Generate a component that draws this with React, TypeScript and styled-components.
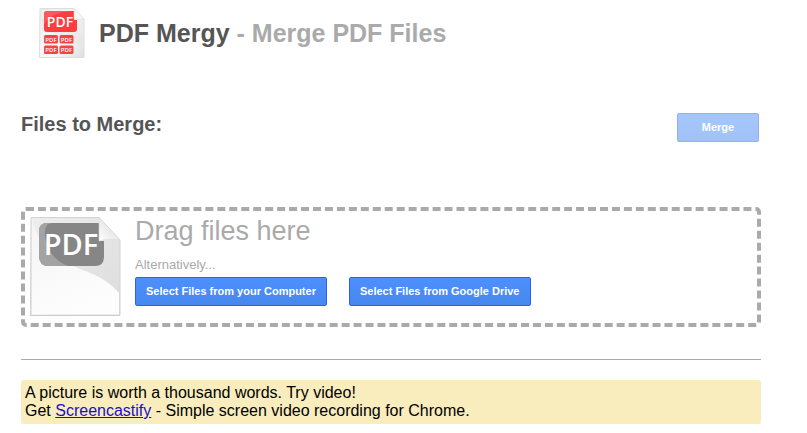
import React from "react";
import styled, { createGlobalStyle } from "styled-components";

const GlobalStyle = createGlobalStyle`
  *, *::before, *::after { box-sizing: border-box; }
  body {
    margin: 0;
    background: #fff;
    color: #000;
    font-family: "Liberation Sans", Arial, sans-serif;
  }
`;

const Page = styled.main`
  padding: 8px 46px 8px 21px;
`;

const Header = styled.header`
  display: flex;
  align-items: center;
  gap: 14px;
  height: 50px;
  padding-left: 18px;
`;

const Title = styled.h1`
  margin: 0;
  font-size: 25px;
  line-height: 30px;
  font-weight: bold;
  color: #555;
`;

const Tagline = styled.span`
  color: #aaa;
`;

const Toolbar = styled.section`
  display: flex;
  justify-content: space-between;
  align-items: flex-start;
  margin-top: 55px;
  padding-right: 2px;
`;

const Heading = styled.h2`
  margin: 0;
  font-size: 20px;
  line-height: 22px;
  color: #555;
`;

const Button = styled.button`
  min-width: 82px;
  height: 29px;
  padding: 0 10px;
  border: 1px solid #2f5bff;
  border-radius: 2px;
  background: linear-gradient(#4d90fe, #4787ed);
  color: #fff;
  font: bold 11px/27px "Liberation Sans", Arial, sans-serif;
  white-space: nowrap;
  cursor: pointer;

  &:disabled {
    opacity: 0.5;
    cursor: default;
  }
`;

const DropZone = styled.section`
  display: flex;
  gap: 14px;
  height: 120px;
  margin-top: 65px;
  padding: 4px;
  border: 4px dashed #aaa;
  border-radius: 5px;
  color: #aaa;
`;

const DropContent = styled.div`
  display: flex;
  flex-direction: column;
`;

const DropTitle = styled.p`
  margin: 0;
  font-size: 27px;
  line-height: 32px;
`;

const DropHint = styled.p`
  margin: 10px 0 4px;
  font-size: 13px;
  line-height: 16px;
`;

const Actions = styled.div`
  display: flex;
  gap: 22px;
`;

const Divider = styled.hr`
  height: 1px;
  margin: 32px 0 20px;
  border: 0;
  background: #aaa;
`;

const Notice = styled.aside`
  padding: 4px;
  border-radius: 2px;
  background: #f9edbe;
  font-size: 16px;
  line-height: 18px;
`;

const NoticeLine = styled.p`
  margin: 0;
`;

const NoticeLink = styled.a`
  color: #1a0dcc;
`;

const IconText = styled.text`
  font-family: "Open Sans", "Noto Sans", sans-serif;
  font-weight: 600;
  fill: #fff;
`;

function MergyLogo() {
  return (
    <svg width="46" height="50" viewBox="0 0 46 50" role="img" aria-label="PDF Mergy">
      <defs>
        <linearGradient id="logoPaper" x1="0" y1="0" x2="1" y2="1">
          <stop offset="0" stopColor="#ececec" />
          <stop offset="0.6" stopColor="#fafafa" />
          <stop offset="1" stopColor="#dedede" />
        </linearGradient>
      </defs>
      <path d="M1 .5H35L45 11V49.5H.5Z" fill="url(#logoPaper)" stroke="#ddd" />
      <path d="M3 23C20 25 38 33 45 43V11H3Z" fill="#e4e4e4" opacity=".6" />
      <path d="M8 3H35V12H38V21Q38 24 35 24H8Q5 24 5 21V6Q5 3 8 3Z" fill="#fa3e40" />
      <path d="M5 17V6Q5 3 8 3H35Q10 4 5 17Z" fill="#ff6968" opacity=".6" />
      <path d="M35 .5L45 11H35Z" fill="#f8f8f8" stroke="#ddd" strokeWidth=".5" />
      {[27, 37.5].map((y) =>
        [5, 20.5].map((x) => (
          <g key={`${x}-${y}`}>
            <rect x={x} y={y} width="14" height="8.500" rx="1.5" fill="#fa4143" />
            <IconText x={x + 7} y={y + 6.5} fontSize="6" textAnchor="middle">PDF</IconText>
          </g>
        )),
      )}
      <IconText x="21" y="19" fontSize="14" textAnchor="middle">PDF</IconText>
    </svg>
  );
}

function PdfFileIcon() {
  return (
    <svg width="92" height="102" viewBox="0 0 92 102" aria-hidden="true">
      <defs>
        <linearGradient id="paper" x1="0" y1="0" x2="1" y2="1">
          <stop offset="0" stopColor="#eeeeee" />
          <stop offset="1" stopColor="#dcdcdc" />
        </linearGradient>
        <linearGradient id="sheen" x1="0" y1="0" x2=".4" y2="1">
          <stop offset="0" stopColor="#f4f4f4" />
          <stop offset="1" stopColor="#fdfdfd" />
        </linearGradient>
        <linearGradient id="fold" x1="0" y1="1" x2="1" y2="0">
          <stop offset="0" stopColor="#fff" />
          <stop offset="1" stopColor="#d4d4d4" />
        </linearGradient>
      </defs>
      <path d="M2 2.5H70L91 25V100.5H1.5Z" fill="url(#paper)" stroke="#d2d2d2" />
      <path d="M3 4C10 37 38 49 59 57C75 63 85 72 90 78V99.5H3Z" fill="url(#sheen)" />
      <path d="M1 100.5H91" stroke="#ccc" />
      <path d="M18 8H70V26H75V42Q75 51 66 51H20Q10 51 10 41V17Q10 8 18 8Z" fill="#868686" />
      <path d="M10 14Q11 8 18 8H24C18 8 15 12 16 21C18 36 26 46 39 51H20Q10 51 10 41Z" fill="#a3a3a3" />
      <path d="M70 2.5V26Q79 23 91 25Z" fill="url(#fold)" stroke="#d4d4d4" strokeWidth=".5" />
      <IconText x="42" y="40" fontSize="29" textAnchor="middle">PDF</IconText>
    </svg>
  );
}

export default function App() {
  return (
    <>
      <GlobalStyle />
      <Page>
        <Header>
          <MergyLogo />
          <Title>
            PDF Mergy <Tagline>- Merge PDF Files</Tagline>
          </Title>
        </Header>
        <Toolbar>
          <Heading>Files to Merge:</Heading>
          <Button type="button" disabled>Merge</Button>
        </Toolbar>
        <DropZone aria-label="Add files">
          <PdfFileIcon />
          <DropContent>
            <DropTitle>Drag files here</DropTitle>
            <DropHint>Alternatively...</DropHint>
            <Actions>
              <Button type="button">Select Files from your Computer</Button>
              <Button type="button">Select Files from Google Drive</Button>
            </Actions>
          </DropContent>
        </DropZone>
        <Divider />
        <Notice>
          <NoticeLine>A picture is worth a thousand words. Try video!</NoticeLine>
          <NoticeLine>
            Get <NoticeLink href="#screencastify">Screencastify</NoticeLink> - Simple screen video recording for Chrome.
          </NoticeLine>
        </Notice>
      </Page>
    </>
  );
}
